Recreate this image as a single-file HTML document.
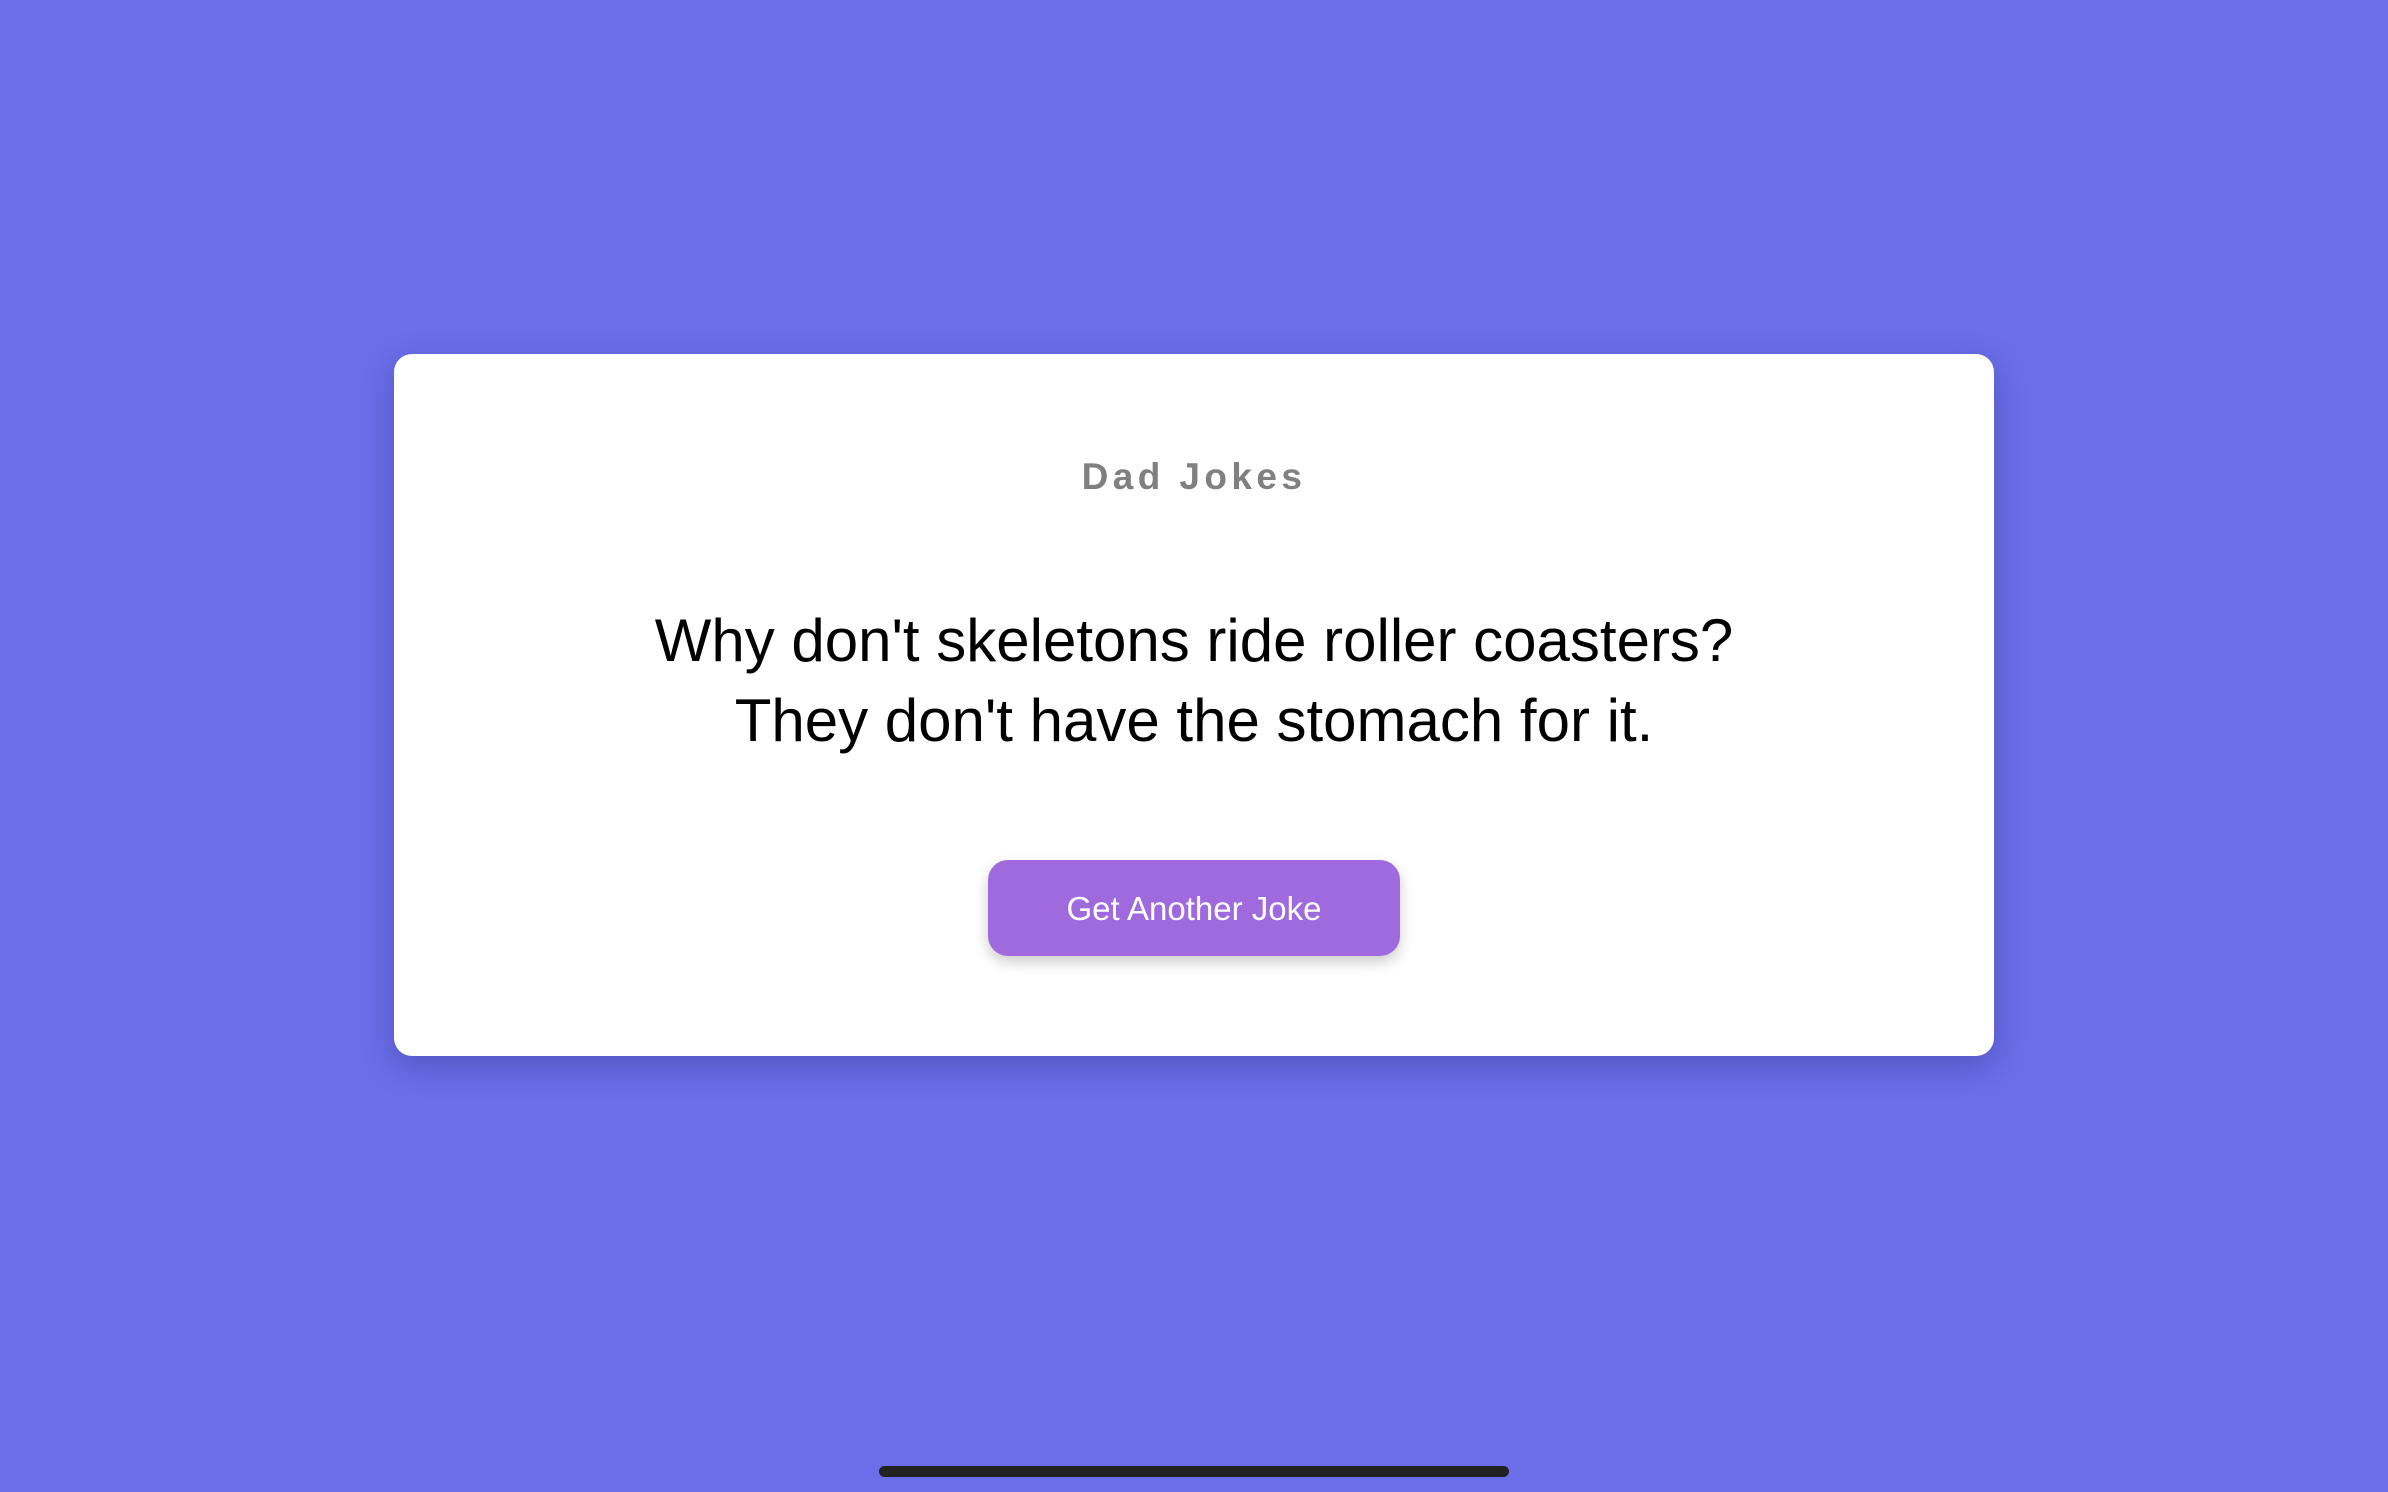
<!DOCTYPE html>
<html><head><style>
html,body{margin:0;padding:0;width:2388px;height:1492px;overflow:hidden;background:#6a6ee8;font-family:"Liberation Sans",Arial,sans-serif}
.card{position:absolute;left:394px;top:354px;width:1600px;height:702px;background:#fff;border-radius:18px;box-shadow:0 10px 30px rgba(40,40,120,0.35)}
.title{position:absolute;left:0;right:0;top:454px;text-align:center;font-size:37px;font-weight:bold;color:#808080;letter-spacing:4.4px;line-height:46px}
.joke{position:absolute;left:0;right:0;top:601px;text-align:center;font-size:60px;line-height:80px;color:#000}
.btn{position:absolute;left:988px;top:860px;width:412px;height:96px;border-radius:20px;background:#a06adf;color:#fff;font-size:33px;line-height:98px;text-align:center;box-shadow:0 6px 14px rgba(0,0,0,0.2)}
.bar{position:absolute;left:879px;top:1466px;width:630px;height:11px;border-radius:6px;background:#222}
</style></head><body>
<div class="card"></div>
<div class="title">Dad Jokes</div>
<div class="joke">Why don't skeletons ride roller coasters?<br>They don't have the stomach for it.</div>
<div class="btn">Get Another Joke</div>
<div class="bar"></div>
</body></html>
